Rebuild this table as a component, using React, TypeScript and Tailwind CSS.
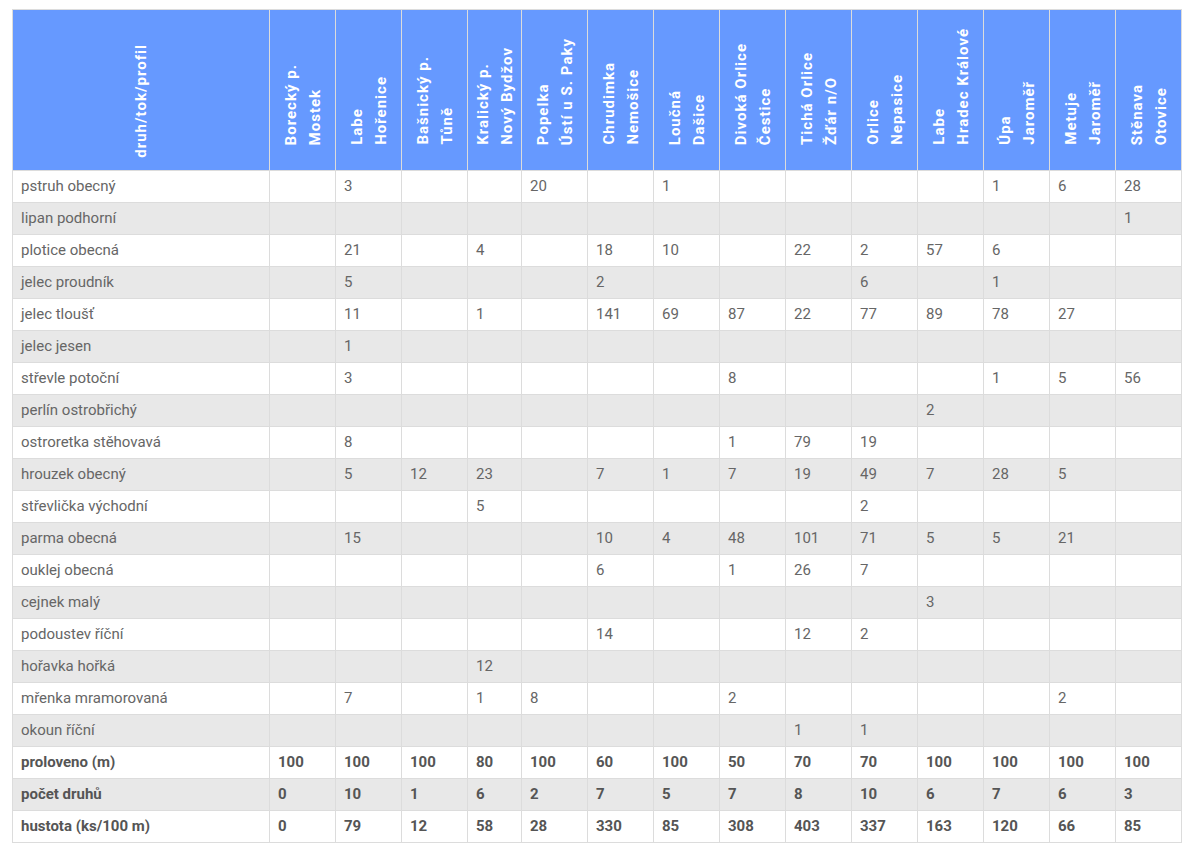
import React from "react";

const sites: [string, string][] = [
  ["Borecký p.", "Mostek"],
  ["Labe", "Hořenice"],
  ["Bašnický p.", "Tůně"],
  ["Kralický p.", "Nový Bydžov"],
  ["Popelka", "Ústí u S. Paky"],
  ["Chrudimka", "Nemošice"],
  ["Loučná", "Dašice"],
  ["Divoká Orlice", "Čestice"],
  ["Tichá Orlice", "Žďár n/O"],
  ["Orlice", "Nepasice"],
  ["Labe", "Hradec Králové"],
  ["Úpa", "Jaroměř"],
  ["Metuje", "Jaroměř"],
  ["Stěnava", "Otovice"],
];

const colWidths = [66, 66, 66, 54, 66, 66, 66, 66, 66, 66, 66, 66, 66, 66];

// species -> { column index (1-based): count }
const species: [string, Record<number, number>][] = [
  ["pstruh obecný", { 2: 3, 5: 20, 7: 1, 12: 1, 13: 6, 14: 28 }],
  ["lipan podhorní", { 14: 1 }],
  ["plotice obecná", { 2: 21, 4: 4, 6: 18, 7: 10, 9: 22, 10: 2, 11: 57, 12: 6 }],
  ["jelec proudník", { 2: 5, 6: 2, 10: 6, 12: 1 }],
  ["jelec tloušť", { 2: 11, 4: 1, 6: 141, 7: 69, 8: 87, 9: 22, 10: 77, 11: 89, 12: 78, 13: 27 }],
  ["jelec jesen", { 2: 1 }],
  ["střevle potoční", { 2: 3, 8: 8, 12: 1, 13: 5, 14: 56 }],
  ["perlín ostrobřichý", { 11: 2 }],
  ["ostroretka stěhovavá", { 2: 8, 8: 1, 9: 79, 10: 19 }],
  ["hrouzek obecný", { 2: 5, 3: 12, 4: 23, 6: 7, 7: 1, 8: 7, 9: 19, 10: 49, 11: 7, 12: 28, 13: 5 }],
  ["střevlička východní", { 4: 5, 10: 2 }],
  ["parma obecná", { 2: 15, 6: 10, 7: 4, 8: 48, 9: 101, 10: 71, 11: 5, 12: 5, 13: 21 }],
  ["ouklej obecná", { 6: 6, 8: 1, 9: 26, 10: 7 }],
  ["cejnek malý", { 11: 3 }],
  ["podoustev říční", { 6: 14, 9: 12, 10: 2 }],
  ["hořavka hořká", { 4: 12 }],
  ["mřenka mramorovaná", { 2: 7, 4: 1, 5: 8, 8: 2, 13: 2 }],
  ["okoun říční", { 9: 1, 10: 1 }],
];

const totals: [string, number[]][] = [
  ["proloveno (m)", [100, 100, 100, 80, 100, 60, 100, 50, 70, 70, 100, 100, 100, 100]],
  ["počet druhů", [0, 10, 1, 6, 2, 7, 5, 7, 8, 10, 6, 7, 6, 3]],
  ["hustota (ks/100 m)", [0, 79, 12, 58, 28, 330, 85, 308, 403, 337, 163, 120, 66, 85]],
];

const vertical: React.CSSProperties = { writingMode: "vertical-rl", transform: "rotate(180deg)" };

export default function App() {
  let rowIndex = 0;
  const rowBg = () => (rowIndex++ % 2 === 0 ? "bg-white" : "bg-[#e8e8e8]");

  return (
    <div className="min-h-[850px] bg-white pl-[12px] pt-[9px] font-['Roboto','Liberation_Sans',sans-serif]">
      <table className="table-fixed border-collapse border border-[#dcdcdc] text-[15px] text-[#666666]">
        <colgroup>
          <col style={{ width: 257 }} />
          {colWidths.map((w, i) => (
            <col key={i} style={{ width: w }} />
          ))}
        </colgroup>
        <thead>
          <tr className="h-[161px] bg-[#6699ff] text-white">
            <th className="border border-[#dcdcdc] p-0 align-bottom">
              <div className="flex h-[160px] items-end justify-center pb-[12px]">
                <span style={vertical} className="text-[15px] font-bold leading-[24px] tracking-[1px]">
                  druh/tok/profil
                </span>
              </div>
            </th>
            {sites.map(([a, b], i) => (
              <th key={i} className="border border-[#dcdcdc] p-0 align-bottom">
                <div className="flex h-[160px] items-end justify-center pb-[25px]">
                  <span style={vertical} className="text-left text-[15px] font-bold leading-[24px] tracking-[1px]">
                    {a}
                    <br />
                    {b}
                  </span>
                </div>
              </th>
            ))}
          </tr>
        </thead>
        <tbody>
          {species.map(([name, counts]) => (
            <tr key={name} className={`h-[32px] ${rowBg()}`}>
              <td className="border border-[#dcdcdc] px-[8px] py-0 whitespace-nowrap">{name}</td>
              {sites.map((_, i) => (
                <td key={i} className="border border-[#dcdcdc] px-[8px] py-0">
                  {counts[i + 1] ?? ""}
                </td>
              ))}
            </tr>
          ))}
          {totals.map(([name, vals]) => (
            <tr key={name} className={`h-[32px] font-bold text-[#555555] ${rowBg()}`}>
              <td className="border border-[#dcdcdc] px-[8px] py-0 whitespace-nowrap">{name}</td>
              {vals.map((v, i) => (
                <td key={i} className="border border-[#dcdcdc] px-[8px] py-0">
                  {v}
                </td>
              ))}
            </tr>
          ))}
        </tbody>
      </table>
    </div>
  );
}
